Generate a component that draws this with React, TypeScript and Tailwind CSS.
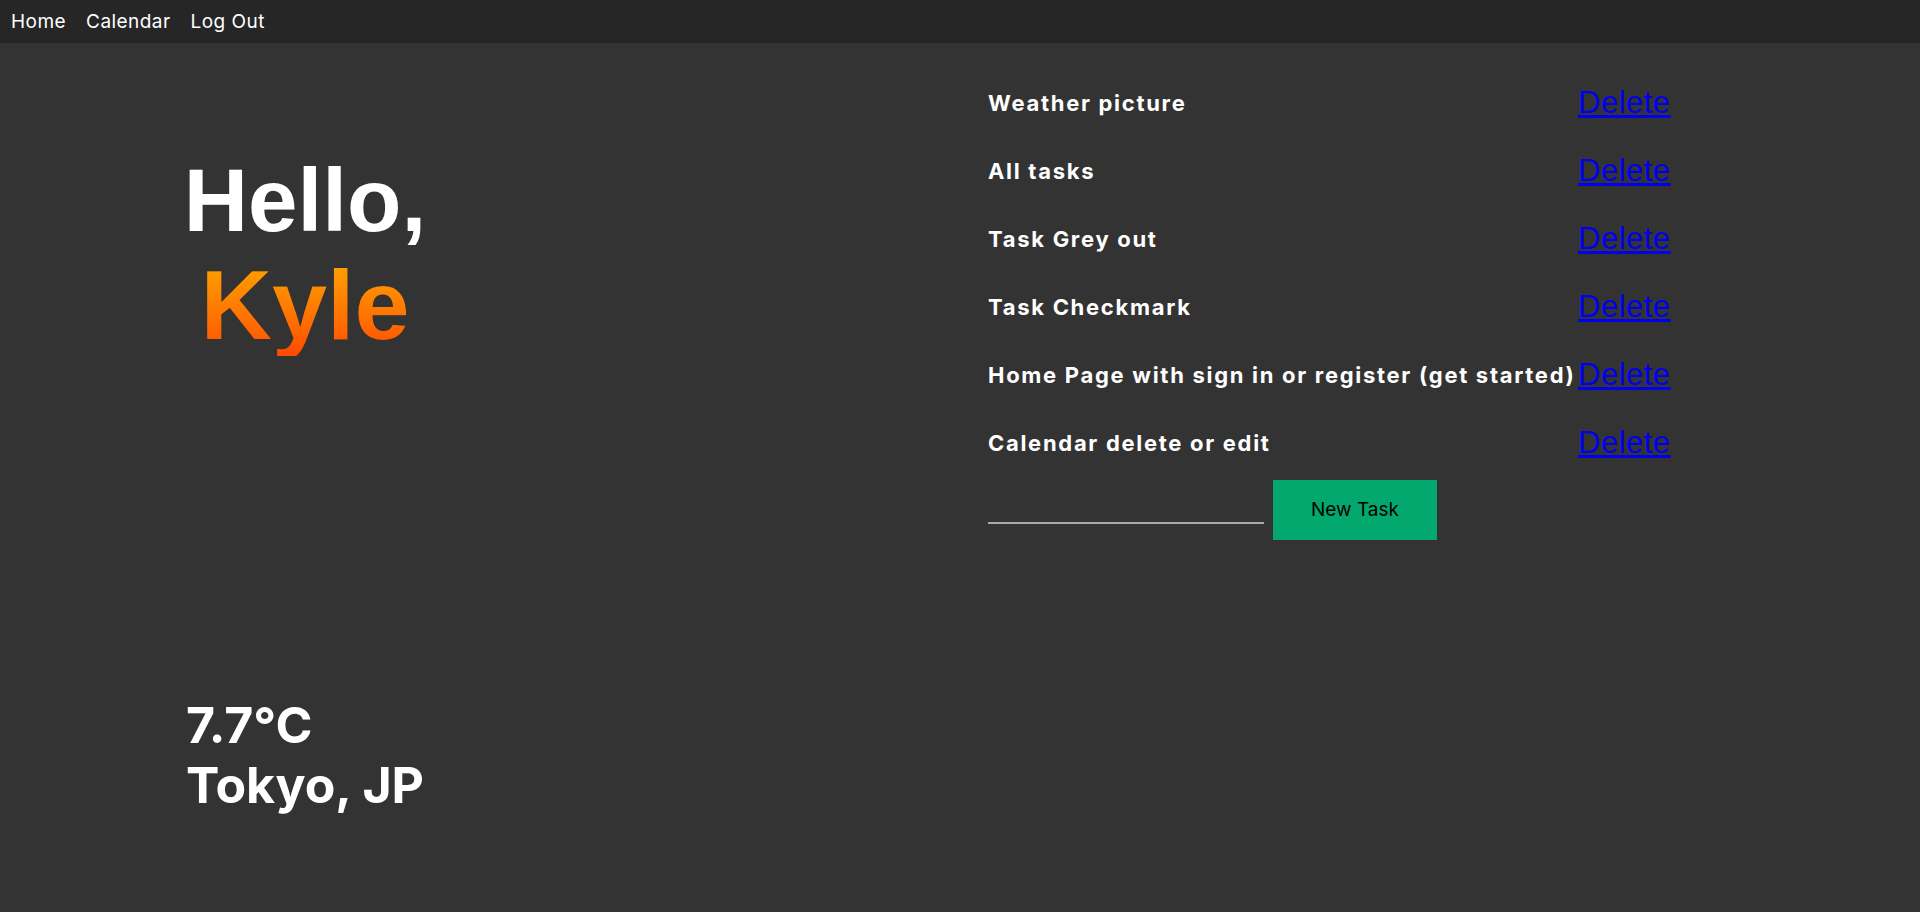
import React from "react";

const tasks = [
  "Weather picture",
  "All tasks",
  "Task Grey out",
  "Task Checkmark",
  "Home Page with sign in or register (get started)",
  "Calendar delete or edit",
];

export default function App() {
  return (
    <div className="min-h-screen bg-[#333333] font-['Inter',sans-serif]">
      <nav className="h-[43px] bg-[#262626] flex items-center pl-[1px]">
        <a className="px-[10px] text-[19px] tracking-[0.45px] text-white leading-none">Home</a>
        <a className="px-[10px] text-[19px] tracking-[0.45px] text-white leading-none">Calendar</a>
        <a className="px-[10px] text-[19px] tracking-[0.45px] text-white leading-none">Log Out</a>
      </nav>
      <main className="flex">
        <div className="w-[610px] flex flex-col items-center">
          <div className="mt-[103px] flex flex-col items-center font-['Liberation_Sans',Arial,sans-serif] font-bold">
            <h1 className="text-[89px] leading-[108px] text-white">Hello,</h1>
            <div className="text-[99px] leading-[102px]">
              <span className="inline-block bg-gradient-to-b from-[#ffa800] to-[#ff4800] bg-clip-text text-transparent [filter:drop-shadow(0_0_0.7px_#0d2033)]">
                Kyle
              </span>
            </div>
          </div>
          <div className="mt-[339px] font-bold text-[50px] leading-[60px] text-white">
            <div>7.7°C</div>
            <div>Tokyo, JP</div>
          </div>
        </div>
        <div className="ml-[378px] pt-[26px] flex flex-col">
          {tasks.map((t) => (
            <div key={t} className="h-[68px] flex items-center">
              <div className="w-[590px] whitespace-nowrap text-white font-bold text-[22px] tracking-[1.7px]">{t}</div>
              <a href="#" className="font-['Liberation_Sans',Arial,sans-serif] text-[31px] tracking-[0.5px] text-[#0000ee] underline">
                Delete
              </a>
            </div>
          ))}
          <div className="flex items-end mt-[2px]">
            <input className="w-[276px] h-[30px] mb-[17px] bg-transparent border-b-2 border-[#aaaaaa] outline-none text-white" />
            <button className="ml-[8px] w-[166px] h-[62px] bg-[#03a86f] border border-[#3a2a3a] text-black text-[19px]">
              New Task
            </button>
          </div>
        </div>
      </main>
    </div>
  );
}
